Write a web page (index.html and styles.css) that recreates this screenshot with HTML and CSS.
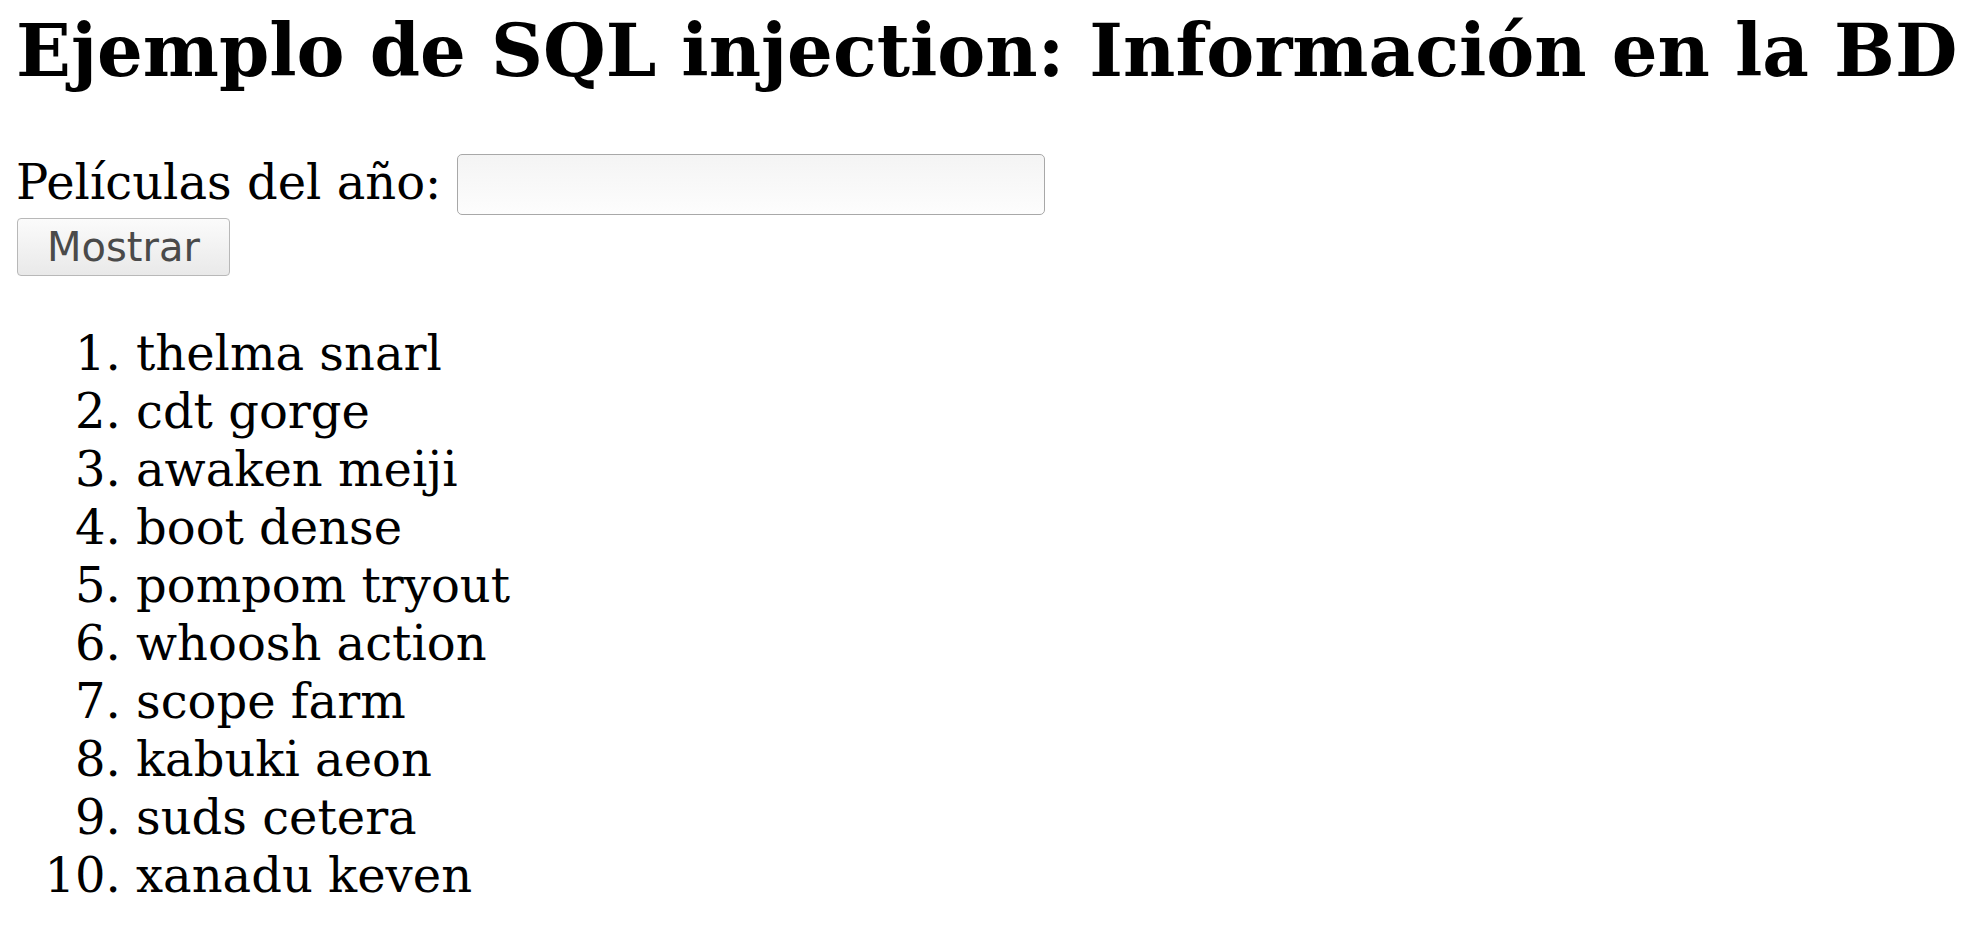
FILE: index.html
```html
<!DOCTYPE html>
<html lang="es">
<head>
<meta charset="utf-8">
<title>Ejemplo de SQL injection</title>
<link rel="stylesheet" href="styles.css">
</head>
<body>
<h1 class="title">Ejemplo de SQL injection: Información en la BD</h1>
<form class="search">
  <div class="row">
    <label class="label" for="anio">Películas del año:</label>
    <input class="field" type="text" id="anio" name="anio">
  </div>
  <button class="btn" type="button">Mostrar</button>
</form>
<ol class="movies">
  <li>thelma snarl</li>
  <li>cdt gorge</li>
  <li>awaken meiji</li>
  <li>boot dense</li>
  <li>pompom tryout</li>
  <li>whoosh action</li>
  <li>scope farm</li>
  <li>kabuki aeon</li>
  <li>suds cetera</li>
  <li>xanadu keven</li>
</ol>
</body>
</html>
```
FILE: styles.css
```css
html, body {
  background: #ffffff;
}
body {
  margin: 0;
  padding: 9px 16px 10px 16px;
  font-family: "DejaVu Serif", serif;
  font-size: 48px;
  line-height: 1.2;
  color: #000000;
}
.title {
  margin: 0 0 61px 0;
  font-size: 72px;
  line-height: 84px;
  font-weight: bold;
  white-space: nowrap;
}
.search {
  margin: 0;
}
.row {
  display: flex;
  align-items: center;
  gap: 16px;
  height: 61px;
}
.label {
  font-size: 48px;
  line-height: 56px;
  margin-bottom: 5px;
}
.field {
  box-sizing: border-box;
  width: 588px;
  height: 61px;
  margin: 0;
  padding: 0 8px;
  border: 1px solid #a8a8a8;
  border-radius: 5px;
  background: linear-gradient(#f4f4f4, #fdfdfd);
  font-family: "DejaVu Sans", sans-serif;
  font-size: 40px;
}
.btn {
  display: block;
  box-sizing: border-box;
  margin: 3px 0 0 1px;
  width: 213px;
  height: 58px;
  padding: 0;
  border: 1px solid #b8b8b8;
  border-radius: 4px;
  background: linear-gradient(#fbfbfb, #e9e9e9);
  font-family: "DejaVu Sans", sans-serif;
  font-size: 40px;
  line-height: 46px;
  color: #4a4a4a;
}
.movies {
  margin: 48px 0 0 0;
  padding-left: 120px;
}
.movies li {
  line-height: 58px;
}
```
